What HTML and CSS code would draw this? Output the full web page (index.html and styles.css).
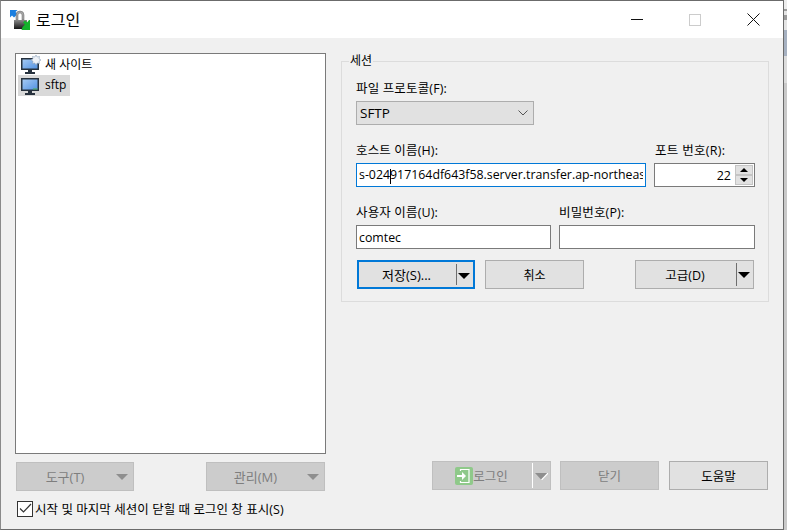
FILE: index.html
```html
<!DOCTYPE html>
<html lang="ko">
<head>
<meta charset="utf-8">
<title>로그인</title>
<link rel="stylesheet" href="styles.css">
</head>
<body>
<div class="window">
  <header class="titlebar">
    <svg class="app-icon" width="20" height="20" viewBox="0 0 20 20">
      <defs>
        <linearGradient id="lockg" x1="0" y1="0" x2="0" y2="1"><stop offset="0" stop-color="#8a8a8a"/><stop offset="1" stop-color="#161616"/></linearGradient>
        <linearGradient id="pcg" x1="0" y1="0" x2="1" y2="1"><stop offset="0" stop-color="#a9cdf5"/><stop offset="1" stop-color="#4f8fe0"/></linearGradient>
      </defs>
      <path d="M0 0h7.500L5.500 2l2 2-3.500 3.500-2-2L0 7.500z" fill="#1a7fe0"/>
      <path d="M6 10V5a4 4 0 0 1 8 0v5h-2V5a2 2 0 0 0-4 0v5z" fill="#a8a8a8" stroke="#666" stroke-width=".5"/>
      <rect x="4" y="10" width="13" height="9" fill="url(#lockg)"/>
      <path d="M12.500 17l2.500-2.500-2-2 2-2 2 2 2-2.500 1 0V20h-8.500z" fill="#14b22b"/>
    </svg>
    <span class="title">로그인</span>
    <div class="controls">
      <span class="ctl ctl-min"></span>
      <span class="ctl ctl-max"></span>
      <svg class="ctl-close" width="13" height="13" viewBox="0 0 13 13"><path d="M.5.500l12 12M12.500.500l-12 12" stroke="#111" stroke-width="1" fill="none"/></svg>
    </div>
  </header>
  <main class="content">
    <section class="left">
      <div class="tree">
        <div class="tree-row">
          <svg class="pc" width="20" height="20" viewBox="0 0 20 20">
            <rect x=".75" y="3.750" width="16.500" height="10.500" fill="url(#pcg)" stroke="#27323e" stroke-width="1.500"/>
            <rect x="7" y="15" width="4" height="2" fill="#27323e"/>
            <rect x="4" y="17" width="10" height="2" fill="#27323e"/>
            <path d="M15 0l1.200 2 2.300-.5-.5 2.300 2 1.200-2 1.200.5 2.300-2.300-.5-1.200 2-1.200-2-2.300.5.500-2.300-2-1.200 2-1.200-.5-2.300 2.300.5z" fill="#eef2f7" stroke="#8aa0b8" stroke-width=".6"/>
          </svg>
          <span class="tree-label">새 사이트</span>
        </div>
        <div class="tree-row tree-row-sel">
          <svg class="pc" width="20" height="20" viewBox="0 0 20 20">
            <rect x=".75" y="2.750" width="16.500" height="11.500" fill="url(#pcg)" stroke="#27323e" stroke-width="1.500"/>
            <rect x="12" y="12.500" width="4.500" height="1" fill="#4fb04f"/>
            <rect x="7" y="15" width="4" height="2" fill="#27323e"/>
            <rect x="4" y="17" width="10" height="2" fill="#27323e"/>
          </svg>
          <span class="tree-label">sftp</span>
        </div>
      </div>
      <div class="left-buttons">
        <div class="btn btn-off btn-menu">도구(T)<i class="tri tri-off"></i></div>
        <div class="btn btn-off btn-menu">관리(M)<i class="tri tri-off"></i></div>
      </div>
      <div class="check-row">
        <span class="checkbox"><svg width="13" height="11" viewBox="0 0 13 11"><path d="M1 5.500l3.500 3.500L12 1" stroke="#333" stroke-width="1.200" fill="none"/></svg></span>
        <span>시작 및 마지막 세션이 닫힐 때 로그인 창 표시(S)</span>
      </div>
    </section>
    <section class="right">
      <fieldset class="group">
        <legend class="legend">세션</legend>
        <label class="lbl">파일 프로토콜(F):</label>
        <div class="select"><span>SFTP</span><svg width="10" height="6" viewBox="0 0 10 6"><path d="M.5.500l4.500 4.500 4.500-4.500" stroke="#555" fill="none"/></svg></div>
        <div class="grid host-grid">
          <label class="lbl">호스트 이름(H):</label>
          <label class="lbl lbl-port">포트 번호(R):</label>
          <div class="field field-focus"><span class="clip">s-024<i class="caret"></i>917164df643f58.server.transfer.ap-northeast</span></div>
          <div class="field field-port">
            <span class="port-val">22</span>
            <span class="spin">
              <span class="spin-btn"><i class="sp-up"></i></span>
              <span class="spin-btn"><i class="sp-down"></i></span>
            </span>
          </div>
        </div>
        <div class="grid user-grid">
          <label class="lbl">사용자 이름(U):</label>
          <label class="lbl">비밀번호(P):</label>
          <div class="field"><span class="clip">comtec</span></div>
          <div class="field"></div>
        </div>
        <div class="group-buttons">
          <div class="btn btn-split btn-default"><span class="split-main">저장(S)...</span><i class="sep"></i><i class="tri"></i></div>
          <div class="btn btn-cancel">취소</div>
          <div class="btn btn-split btn-adv"><span class="split-main">고급(D)</span><i class="sep"></i><i class="tri"></i></div>
        </div>
      </fieldset>
      <div class="right-buttons">
        <div class="btn btn-off btn-split btn-login">
          <span class="split-main login-main">
            <svg width="18" height="18" viewBox="0 0 18 18"><rect width="18" height="18" rx="2" fill="#8fc98a"/><path d="M5.500 4V2.500h8.500v13H5.500V14" stroke="#fff" fill="none" stroke-width="1.200"/><path d="M2 8h5V5l4 4-4 4v-3H2z" fill="#fff"/></svg>
            <span>로그인</span>
          </span>
          <i class="sep sep-off"></i>
          <svg class="tri-svg" width="13" height="7" viewBox="0 0 13 7"><path d="M0 0h13L6.500 7z" fill="#8e8e8e"/><path d="M6.500 7L13 0" stroke="#fff" stroke-width="1.200"/></svg>
        </div>
        <div class="btn btn-off btn-close">닫기</div>
        <div class="btn btn-help">도움말</div>
      </div>
    </section>
  </main>
</div>
</body>
</html>
```
FILE: styles.css
```css
* { box-sizing: border-box; }
html, body { margin: 0; padding: 0; }
body {
  width: 787px;
  height: 530px;
  overflow: hidden;
  background: linear-gradient(to bottom, #ececec 0 9px, #9a9a9a 9px 11px, #e4e4e4 11px 15px, #9a9a9a 15px 20px, #e4e4e4 20px 30px, #a6b1c1 30px 56px, #dcdcdc 56px 83px, #c9c9c9 83px);
  font-family: "Open Sans", "Noto Sans CJK KR", sans-serif;
  font-size: 12.5px;
  color: #000;
}
.window {
  width: 784px;
  height: 530px;
  background: #f0f0f0;
  border: 1px solid #6b6b6b;
  border-left-color: #8a8a8a;
  display: flex;
  flex-direction: column;
}
.titlebar {
  height: 37px;
  flex: none;
  background: #fff;
  display: flex;
  align-items: center;
  padding-left: 9px;
}
.title { margin-left: 6px; font-size: 16px; line-height: 20px; }
.controls { margin-left: auto; display: flex; align-items: center; padding-right: 23px; }
.ctl { display: block; }
.ctl-min { width: 12px; height: 1px; background: #111; }
.ctl-max { width: 12px; height: 12px; border: 1px solid #ccc; margin-left: 46px; }
.ctl-close { display: block; margin-left: 46px; }
.content { flex: 1; display: flex; min-height: 0; padding: 15px 14px 0 14px; }
.left { width: 311px; flex: none; display: flex; flex-direction: column; }
.tree {
  width: 311px;
  height: 401px;
  background: #fff;
  border: 1px solid #7a7a7a;
  padding: 0 2px;
}
.tree-row { display: flex; align-items: center; gap: 4px; height: 21px; width: 52px; padding-left: 3px; white-space: nowrap; }
.tree-row-sel { background: #d9d9d9; }
.pc { flex: none; }
.tree-label { font-size: 12px; position: relative; top: -1px; }
.left-buttons { display: flex; justify-content: space-between; margin-top: 8px; padding: 0 0 0 1px; }
.btn {
  height: 29px;
  width: 119px;
  background: #e1e1e1;
  border: 1px solid #adadad;
  display: flex;
  align-items: center;
  justify-content: center;
  position: relative;
}
.btn-off { background: #cccccc; border-color: #bfbfbf; color: #7e7e7e; }
.btn-menu { width: 118px; padding-right: 20px; font-size: 13px; }
.left-buttons .btn:last-child { width: 119px; margin-right: 1px; }
.tri {
  position: absolute;
  right: 3px;
  top: 11px;
  width: 0;
  height: 0;
  border-left: 6px solid transparent;
  border-right: 6px solid transparent;
  border-top: 6px solid #000;
}
.tri-off { border-top-color: #8e8e8e; right: 5px; }
.tri-svg { position: absolute; right: 2px; top: 11px; }
.check-row { display: flex; align-items: center; gap: 2px; margin-top: 9px; padding-left: 2px; height: 17px; font-size: 12.5px; letter-spacing: .05px; }
.checkbox {
  width: 16px;
  height: 16px;
  flex: none;
  border: 1px solid #333;
  background: #fff;
  display: flex;
  align-items: center;
  justify-content: center;
}
.right { width: 428px; margin-left: 15px; flex: none; display: flex; flex-direction: column; }
.group {
  margin: 0;
  min-width: 0;
  width: 428px;
  height: 249px;
  padding: 0 14px;
  border: 1px solid #dcdcdc;
}
.legend { padding: 0 1px; margin-left: -7px; font-size: 12px; line-height: 16px; height: 16px; }
.lbl { display: block; line-height: 16px; height: 16px; padding-top: 1px; letter-spacing: .15px; }
.lbl-port { margin-left: 1px; letter-spacing: .3px; }
.group > .lbl { margin-top: 11px; }
.select {
  width: 178px;
  height: 24px;
  margin-top: 5px;
  background: #e1e1e1;
  border: 1px solid #adadad;
  display: flex;
  align-items: center;
  justify-content: space-between;
  padding: 0 5px 0 3px;
  font-size: 13.5px;
}
.grid { display: grid; column-gap: 8px; row-gap: 5px; }
.host-grid { grid-template-columns: 290px 101px; margin-top: 17px; }
.user-grid { grid-template-columns: 195px 196px; margin-top: 17px; }
.field {
  height: 24px;
  background: #fff;
  border: 1px solid #7a7a7a;
  display: flex;
  align-items: center;
  padding: 0 2px;
  overflow: hidden;
}
.field-focus { border-color: #0078d7; }
.clip { white-space: nowrap; overflow: hidden; width: 100%; font-size: 12.35px; }
.caret { display: inline-block; width: 1px; height: 15px; background: #000; vertical-align: middle; margin-right: -1px; }
.field-port { justify-content: flex-end; padding: 0 1px 0 2px; gap: 2px; }
.port-val { margin-right: 2px; }
.spin { display: flex; flex-direction: column; width: 18px; height: 20px; flex: none; }
.spin-btn { flex: 1; background: #e1e1e1; border: 1px solid #c4c4c4; display: flex; align-items: center; justify-content: center; }
.sp-up, .sp-down { width: 0; height: 0; border-left: 4px solid transparent; border-right: 4px solid transparent; }
.sp-up { border-bottom: 4px solid #000; }
.sp-down { border-top: 4px solid #000; }
.group-buttons { display: flex; margin-top: 11px; padding-left: 1px; height: 29px; }
.btn-split { justify-content: flex-start; }
.split-main { flex: 1; text-align: center; padding-right: 19px; font-size: 13px; }
.btn-adv .split-main { font-size: 12.5px; }
.sep { position: absolute; right: 16px; top: 2px; bottom: 2px; width: 1px; background: #6e6e6e; }
.sep-off { background: #fff; right: 17px; top: 1px; bottom: 1px; }
.btn-default { width: 118px; border: 2px solid #0078d7; }
.btn-cancel { width: 99px; margin-left: 10px; font-size: 12px; }
.btn-adv { width: 119px; margin-left: 51px; }
.right-buttons { display: flex; margin-top: 159px; padding-left: 91px; gap: 9px; }
.btn-login { width: 119px; }
.login-main { display: flex; align-items: center; justify-content: center; padding-right: 20px; font-size: 12.5px; }
.btn-close { width: 99px; }
.btn-help { width: 99px; margin-left: 1px; }
```
